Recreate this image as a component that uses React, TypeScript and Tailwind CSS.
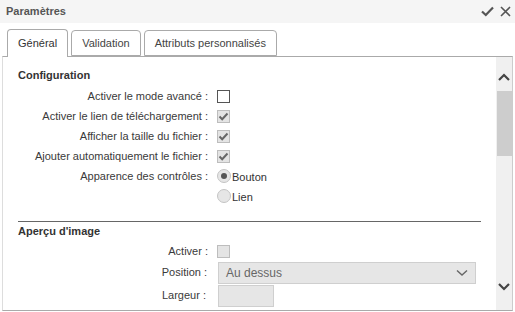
import React from 'react';

const font = { fontFamily: '"Liberation Sans", Arial, sans-serif' };

const Check = () => (
  <svg width="11" height="9" viewBox="0 0 11 9" fill="none">
    <path d="M1.5 4.5 L4.2 7.2 L9.5 1.5" stroke="#666" strokeWidth="2" />
  </svg>
);

const Box = ({ checked, disabled }: { checked?: boolean; disabled?: boolean }) => (
  <span
    className={
      'w-[13px] h-[13px] flex items-center justify-center border ' +
      (checked || disabled ? 'bg-[#e4e4e4] border-[#bdbdbd]' : 'bg-white border-[#555]')
    }
  >
    {checked && <Check />}
  </span>
);

const Radio = ({ checked, label }: { checked?: boolean; label: string }) => (
  <div className="flex items-center h-[20px] gap-[1px]">
    <span className="w-[14px] h-[14px] rounded-full border border-[#c4c4c4] bg-[#e6e6e6] flex items-center justify-center">
      {checked && <span className="w-[6px] h-[6px] rounded-full bg-[#555]" />}
    </span>
    <span className="mt-[3px] text-[11px] text-[#333]">{label}</span>
  </div>
);

const Row = ({ label, children }: { label: string; children: React.ReactNode }) => (
  <div className="flex items-center h-[20px]">
    <span className="w-[190px] text-right text-[11px] text-[#3a3a3a]">{label}</span>
    <div className="pl-[9px] flex items-center">{children}</div>
  </div>
);

export default function App() {
  return (
    <div className="w-[515px] h-[312px] bg-white flex flex-col overflow-hidden" style={font}>
      <div className="h-[23px] bg-[#f5f5f5] flex items-center justify-between pl-[6px] pr-[4px] shrink-0">
        <span className="text-[11px] font-bold text-[#555]">Paramètres</span>
        <div className="flex items-center gap-[6px]">
          <svg width="13" height="11" viewBox="0 0 13 11" fill="none">
            <path d="M1 5.5 L4.8 9 L12 1.5" stroke="#555" strokeWidth="2.2" />
          </svg>
          <svg width="11" height="11" viewBox="0 0 11 11" fill="none">
            <path d="M1 1 L10 10 M10 1 L1 10" stroke="#555" strokeWidth="1.6" />
          </svg>
        </div>
      </div>

      <div className="flex items-end gap-[3px] pt-[6px] h-[33px] shrink-0 mx-[2px] pl-[5px]">
        <div className="h-[28px] px-[10px] flex items-center border border-b-0 border-[#aaa] rounded-t-[4px] bg-white text-[11px] text-[#333] relative top-[1px]">
          Général
        </div>
        <div className="h-[26px] px-[10px] flex items-center border border-[#aaa] rounded-t-[4px] bg-white text-[11px] text-[#444]">
          Validation
        </div>
        <div className="h-[26px] px-[10px] flex items-center border border-[#aaa] rounded-t-[4px] bg-white text-[11px] text-[#444]">
          Attributs personnalisés
        </div>
      </div>

      <div className="flex flex-1 min-h-0 mx-[2px] border border-[#aaa] border-l-[#ddd] border-r-[#ccc] mb-[1px]">
        <div className="flex-1 overflow-hidden pl-[15px] pr-[15px] pt-[11px]">
          <div className="text-[11px] font-bold text-[#333] h-[15px] leading-[15px]">Configuration</div>
          <div className="mt-[3px]">
            <Row label="Activer le mode avancé :">
              <Box />
            </Row>
            <Row label="Activer le lien de téléchargement :">
              <Box checked />
            </Row>
            <Row label="Afficher la taille du fichier :">
              <Box checked />
            </Row>
            <Row label="Ajouter automatiquement le fichier :">
              <Box checked />
            </Row>
            <div className="flex">
              <span className="w-[190px] text-right text-[11px] text-[#3a3a3a] h-[20px] leading-[20px]">Apparence des contrôles :</span>
              <div className="pl-[9px] flex flex-col">
                <Radio checked label="Bouton" />
                <Radio label="Lien" />
              </div>
            </div>
          </div>
          <div className="mt-[15px] border-t border-[#666] w-[463px]" />
          <div className="mt-[2px] text-[11px] font-bold text-[#333] h-[15px] leading-[15px]">Aperçu d'image</div>
          <div className="mt-[2px]">
            <Row label="Activer :">
              <Box disabled />
            </Row>
            <div className="flex items-center h-[23px]">
              <span className="w-[189px] text-right text-[11px] text-[#3a3a3a]">Position :</span>
              <div className="ml-[11px] w-[258px] h-[22px] bg-[#e6e6e6] border border-[#cfcfcf] flex items-center justify-between pl-[7px] pr-[7px]">
                <span className="text-[12px] text-[#666]">Au dessus</span>
                <svg width="12" height="8" viewBox="0 0 12 8" fill="none">
                  <path d="M1 1.5 L6 6 L11 1.5" stroke="#666" strokeWidth="1.4" />
                </svg>
              </div>
            </div>
            <div className="flex items-start h-[24px] mt-[1px]">
              <span className="w-[188px] text-right text-[11px] text-[#3a3a3a] pt-[2px]">Largeur :</span>
              <div className="ml-[12px] w-[56px] h-[22px] bg-[#e6e6e6] border border-[#cfcfcf]" />
            </div>
          </div>
        </div>
        <div className="w-[16px] bg-[#f0f0f0] flex flex-col items-center shrink-0">
          <div className="h-[34px] flex items-center justify-center pt-[6px]">
            <svg width="12" height="8" viewBox="0 0 12 8" fill="none">
              <path d="M1 7 L6 2 L11 7" stroke="#444" strokeWidth="2.2" />
            </svg>
          </div>
          <div className="w-[15px] h-[65px] bg-[#cdcdcd]" />
          <div className="flex-1" />
          <div className="h-[30px] flex items-start justify-center pt-[3px]">
            <svg width="12" height="8" viewBox="0 0 12 8" fill="none">
              <path d="M1 1 L6 6 L11 1" stroke="#444" strokeWidth="2.2" />
            </svg>
          </div>
        </div>
      </div>
    </div>
  );
}
